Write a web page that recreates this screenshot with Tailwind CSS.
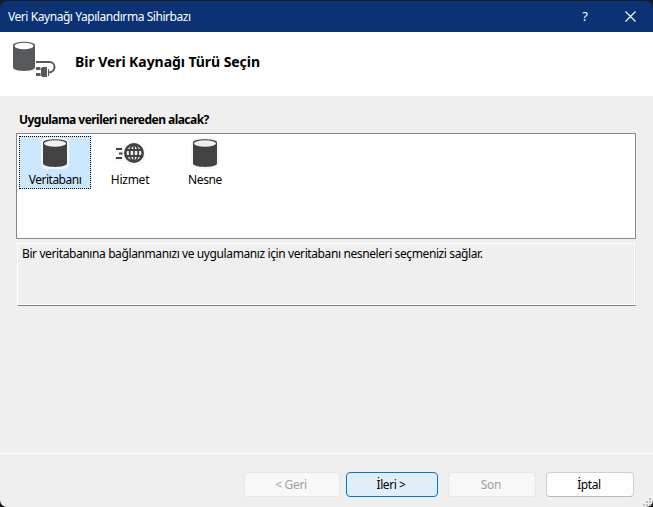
<!DOCTYPE html>
<html lang="tr">
<head>
<meta charset="utf-8">
<title>Veri Kaynağı Yapılandırma Sihirbazı</title>
<script src="https://cdn.jsdelivr.net/npm/@tailwindcss/browser@4"></script>
</head>
<body class="bg-[#1b1b1d] overflow-hidden">
<svg class="hidden">
  <symbol id="db" viewBox="0 0 28 32">
    <rect x="0" y="0" width="28" height="31" rx="5" fill="#f6f6f6"/>
    <path d="M2 4.500C2 .2 26 .2 26 4.500V25.500C26 30 2 30 2 25.500Z" fill="#424242"/>
    <ellipse cx="14" cy="5.500" rx="11" ry="3.300" fill="#f0eff1"/>
  </symbol>
</svg>
<div class="w-[653px] h-[507px] flex flex-col pt-px font-['Noto_Sans','Open_Sans',sans-serif] text-[12px] leading-4 text-black whitespace-nowrap">
  <header class="h-[31px] shrink-0 bg-[#0b3275] rounded-t-[7px] flex items-center pl-2 text-white">
    <span class="tracking-[-0.44px]">Veri Kaynağı Yapılandırma Sihirbazı</span>
    <span class="ml-auto w-[10px] text-center text-[13px] pb-px">?</span>
    <svg class="ml-[35px] mr-[17px]" width="11" height="11" viewBox="0 0 11 11"><path d="M.5 .5l10 10M10.500 .5l-10 10" stroke="#fff" stroke-width="1.100"/></svg>
  </header>
  <section class="h-16 shrink-0 bg-white flex items-center pl-[12px]">
    <svg class="-mt-[10px]" width="44" height="38" viewBox="0 0 44 38">
      <path d="M1 5.500C1 .5 23 .5 23 5.500V27.500C23 32 1 32 1 27.500Z" fill="#58595b"/>
      <ellipse cx="12" cy="6" rx="9.500" ry="3.300" fill="#fff"/>
      <path d="M24 22H37.500C44 22 44.500 32 37 32.500" fill="none" stroke="#58595b" stroke-width="2"/>
      <path d="M24 27h4.500v3H24zM24 33h4.500v3H24zM30 27h5v10h-5zM29 28h1v8h-1zM36 29h1v7h-1z" fill="#58595b"/>
    </svg>
    <h1 class="ml-[19px] -mt-[5px] font-bold text-[14px] tracking-[-0.06px]">Bir Veri Kaynağı Türü Seçin</h1>
  </section>
  <main class="h-[358px] shrink-0 bg-[#efefef] pl-4 pr-[17px] pt-4 border-b border-white">
    <h2 class="pl-[3px] font-bold text-[12px] tracking-[-0.53px]">Uygulama verileri nereden alacak?</h2>
    <div class="mt-[5px] h-[106px] border border-[#828790] bg-white pl-[2px] pt-[2px] flex gap-[3px]">
      <div class="w-[72px] h-[53px] bg-[#cce8ff] border border-dotted border-black flex flex-col items-center pt-px">
        <svg width="28" height="32"><use href="#db"/></svg>
        <span class="mt-[2px] tracking-[-0.5px]">Veritabanı</span>
      </div>
      <div class="w-[72px] h-[53px] flex flex-col items-center pt-[2px]">
        <svg width="32" height="32" viewBox="0 0 32 32">
          <path d="M1 8h10l4-4h11l5 6v11l-5 6H15l-4-4H1z" fill="#f8f8f8"/>
          <path d="M2 11h6M5 15.500h3.500M2 20h6" stroke="#424242" stroke-width="2"/>
          <circle cx="20" cy="15" r="10" fill="#424242"/>
          <circle cx="20" cy="15" r="7.400" fill="#f0eff1"/>
          <path d="M12 12h16M12 18h16" stroke="#424242" stroke-width="2"/>
          <path d="M20 7v16" stroke="#424242" stroke-width="1.600"/>
          <ellipse cx="20" cy="15" rx="4.300" ry="8" fill="none" stroke="#424242" stroke-width="1.800"/>
        </svg>
        <span class="mt-[2px] tracking-[-0.25px]">Hizmet</span>
      </div>
      <div class="w-[72px] h-[53px] flex flex-col items-center pt-[2px]">
        <svg width="28" height="32"><use href="#db"/></svg>
        <span class="mt-[2px] tracking-[-0.4px]">Nesne</span>
      </div>
    </div>
    <div class="mt-[4px] ml-px h-[63px] border border-t-white border-l-white border-r-[#e7e7e7] border-b-[#808080] shadow-[inset_-1px_-1px_0_#fff] pl-1 pt-[2px]">
      <span class="tracking-[-0.395px]">Bir veritabanına bağlanmanızı ve uygulamanız için veritabanı nesneleri seçmenizi sağlar.</span>
    </div>
  </main>
  <footer class="relative flex-1 bg-[#efefef] flex items-start pt-[18px] pl-[244px] rounded-b-[7px]">
    <button class="w-[96px] h-[25px] rounded-[4px] border border-[#e7e7e7] bg-[#f8f8f8] text-[#a0a0a0] tracking-[-0.3px] pr-[2px]">&lt; Geri</button>
    <button class="ml-[6px] w-[92px] h-[25px] rounded-[4px] border border-[#0078d4] bg-[#e0eef9] tracking-[-0.45px] pr-[2px]">İleri &gt;</button>
    <button class="ml-[10px] w-[88px] h-[25px] rounded-[4px] border border-[#e7e7e7] bg-[#f8f8f8] text-[#a0a0a0] tracking-[-0.3px] pr-[2px]">Son</button>
    <button class="ml-[10px] w-[88px] h-[25px] rounded-[4px] border border-[#d0d0d0] border-b-[#bababa] bg-[#fdfdfd] tracking-[-0.4px] pr-[2px]">İptal</button>
    <svg class="absolute right-[1px] bottom-0" width="9" height="9" viewBox="0 0 9 9"><path d="M6 0h2v2H6zM3 3h2v2H3zM6 3h2v2H6zM0 6h2v2H0zM3 6h2v2H3zM6 6h2v2H6z" fill="#bfbfbf"/></svg>
  </footer>
</div>
</body>
</html>
